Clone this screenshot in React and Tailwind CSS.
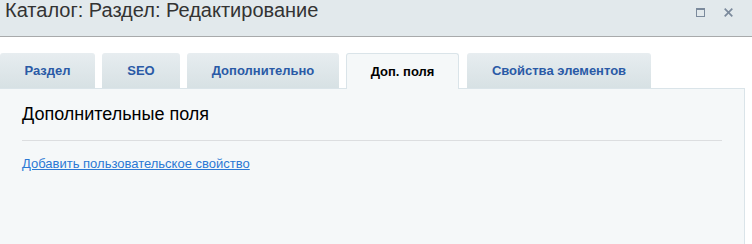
import React from 'react';

const tabs = [
  { label: 'Раздел', w: 'w-[95px]' },
  { label: 'SEO', w: 'w-[78px]' },
  { label: 'Дополнительно', w: 'w-[152px]' },
  { label: 'Доп. поля', w: 'w-[113px]', active: true },
  { label: 'Свойства элементов', w: 'w-[184px]' },
];

const App = () => {
  return (
    <div
      className="w-[752px] h-[244px] overflow-hidden bg-white flex flex-col"
      style={{ fontFamily: '"Liberation Sans", Arial, sans-serif' }}
    >
      {/* title bar */}
      <div className="h-[37px] shrink-0 bg-[#e2e9ec] border-b border-[#a8aaab] flex items-start justify-between">
        <h1 className="pl-[5px] text-[20px] leading-[20px] text-[#333]">
          Каталог: Раздел: Редактирование
        </h1>
        <div className="flex items-center gap-[19px] pt-[8px] pr-[19px]">
          <span className="block w-[9px] h-[9px] border border-[#7b8a9c] border-t-2" />
          <svg width="9" height="9" viewBox="0 0 9 9" className="block">
            <path d="M0.7 0.7 L8.3 8.3 M8.3 0.7 L0.7 8.3" stroke="#7b8a9c" strokeWidth="1.7" />
          </svg>
        </div>
      </div>

      {/* tabs */}
      <div className="flex items-end gap-[7px] pt-[16px] shrink-0 relative z-10">
        {tabs.map((tab) =>
          tab.active ? (
            <div
              key={tab.label}
              className={`${tab.w} h-[36px] -mb-px mr-px flex items-center justify-center rounded-t-[3px] border border-b-0 border-[#dae4e9] bg-[#f5f8f9] text-[13px] font-bold text-black`}
            >
              {tab.label}
            </div>
          ) : (
            <div
              key={tab.label}
              className={`${tab.w} h-[35px] flex items-center justify-center rounded-t-[3px] bg-gradient-to-b from-[#e7edf0] to-[#d7e1e4] text-[13px] font-bold text-[#2a5aa6]`}
            >
              {tab.label}
            </div>
          )
        )}
      </div>

      {/* panel */}
      <div className="w-[745px] flex-1 border-t border-r border-[#dae4e9] bg-[#f5f8f9] pl-[22px] pr-[22px]">
        <h2 className="pt-[15px] text-[18px] leading-[20px] text-black">Дополнительные поля</h2>
        <div className="mt-[16px] h-px bg-[#dcdee0]" />
        <a href="#" className="block mt-[15px] text-[13px] leading-[15px] text-[#2b78d4] underline">
          Добавить пользовательское свойство
        </a>
      </div>
    </div>
  );
};

export default App;
